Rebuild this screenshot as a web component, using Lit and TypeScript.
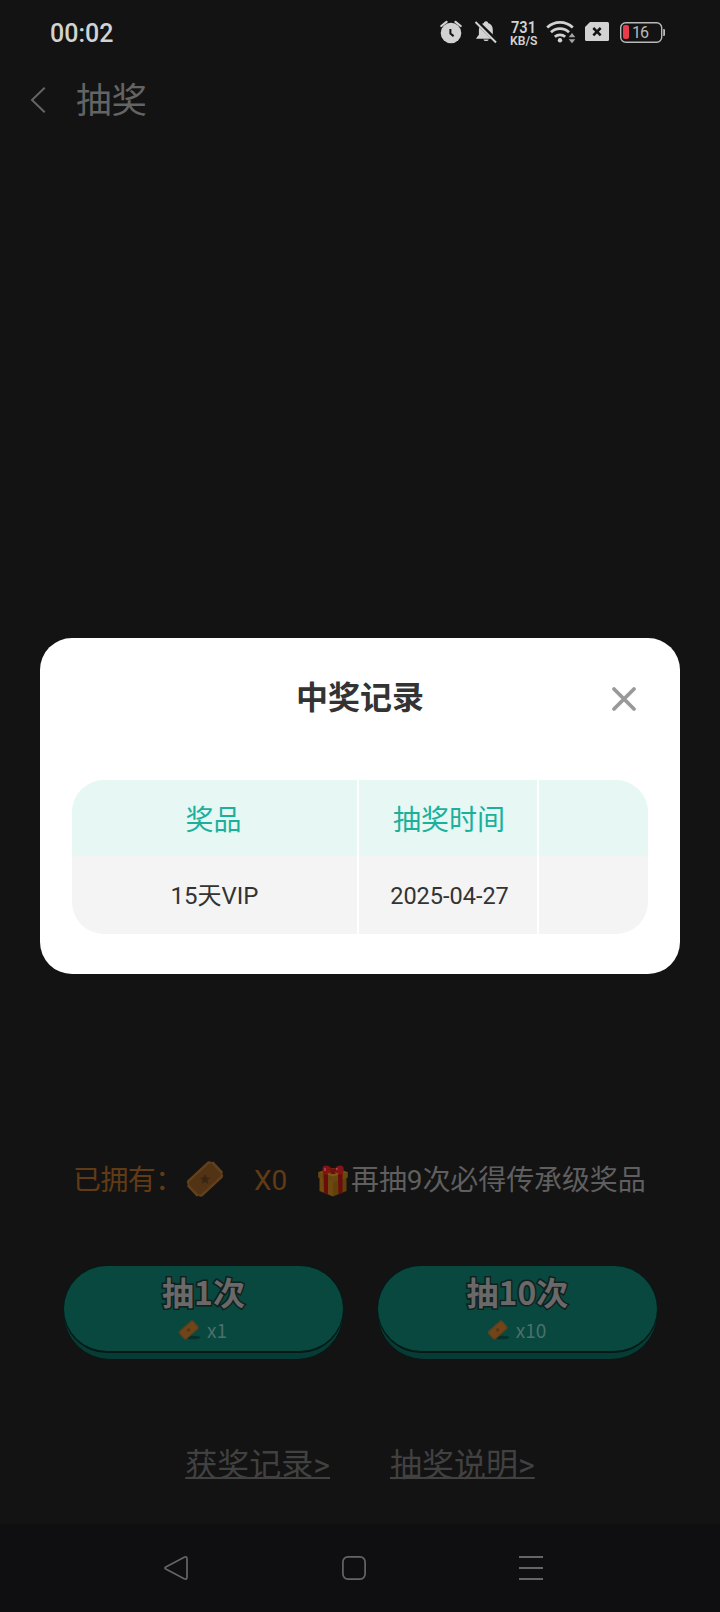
import { LitElement, html, css, svg } from "lit";
import { customElement, property } from "lit/decorators.js";

const ticketShape = svg`
  <g transform="rotate(-43 20 20)">
    <path d="M4 10.500l2-1.500h28l2 1.500 0 1.500 2 1v14l-2 1 0 1.500-2 1.500H6l-2-1.500 0-1.500-2-1v-14l2-1z" fill="#62401b"/>
    <rect x="4.500" y="11.500" width="31" height="17" rx="3" fill="#523414"/>
    <path transform="rotate(43 20 20)" d="M20 15l1.500 3.500 3.800.2-3 2.400 1.100 3.800-3.400-2.100-3.400 2.100 1.100-3.800-3-2.400 3.800-.2z" fill="#382614"/>
  </g>`;

const miniTicketShape = svg`
  <ellipse cx="28" cy="36.500" rx="17" ry="4" fill="#06302a"/>
  <g transform="rotate(-42 20 20)">
    <rect x="-2" y="7" width="43" height="25" rx="6" fill="#5c4020"/>
    <rect x="1" y="10" width="37" height="19" rx="4" fill="#704619"/>
    <circle cx="19.500" cy="19.500" r="4" fill="#593717"/>
  </g>`;

@customElement("ticket-icon")
export class TicketIcon extends LitElement {
  @property({ type: Boolean }) mini = false;
  static styles = css`
    :host { display: block; flex: none; }
    .art { display: block; width: 100%; height: 100%; overflow: visible; }
  `;
  render() {
    return html`<svg class="art" viewBox="0 0 40 40">${this.mini ? miniTicketShape : ticketShape}</svg>`;
  }
}

@customElement("status-bar")
export class StatusBar extends LitElement {
  static styles = css`
    :host {
      display: flex; align-items: center; height: 64px; box-sizing: border-box;
      padding: 0 54px 0 50px; color: #d2d2d2; font-family: Roboto, sans-serif;
    }
    .clock { flex: 1; font-size: 25px; line-height: 30px; font-weight: 500; padding-top: 3px; }
    .icons { display: block; width: 226px; height: 32px; }
    .rate { font-weight: 600; font-size: 16px; }
    .unit { font-weight: 600; font-size: 12px; }
    .level { font-size: 16px; }
  `;
  render() {
    return html`
      <span class="clock">00:02</span>
      <svg class="icons" viewBox="440 16 226 32" fill="#d2d2d2">
        <circle cx="451" cy="33" r="10.300"/>
        <path d="M441.300 26l5.200-4.200M460.700 26l-5.200-4.200" stroke="#d2d2d2" stroke-width="2.200" fill="none" stroke-linecap="round"/>
        <path d="M450.400 29v4.500l3.200 2.600" stroke="#131313" stroke-width="2" fill="none"/>
        <path d="M486 21.200c1.300 0 2 .8 2.100 1.800 3.100 1 4.700 3.600 4.700 6.800v5l3.200 3.400v.6H476.200v-.6l2.700-3.400v-5c0-3.200 1.700-5.800 5-6.800.1-1 .8-1.800 2.100-1.800zM483.500 39.500h5.200c-.4 2-4.800 2-5.200 0z"/>
        <path d="M476.500 21.500l21 20.500" stroke="#131313" stroke-width="4.500"/>
        <path d="M475.500 22l20.500 20.500" stroke="#d2d2d2" stroke-width="2"/>
        <text class="rate" x="511" y="32.800" textLength="25" lengthAdjust="spacingAndGlyphs">731</text>
        <text class="unit" x="510" y="44.500" textLength="27.500" lengthAdjust="spacingAndGlyphs">KB/S</text>
        <g fill="none" stroke="#d2d2d2" stroke-width="2.700">
          <path d="M547.200 27.500a18.500 18.500 0 0 1 25.600 0"/>
          <path d="M551 32.300a13 13 0 0 1 18 0"/>
          <path d="M554.800 36.700a8 8 0 0 1 10.400 0"/>
        </g>
        <circle cx="560" cy="40.300" r="2.200"/>
        <path d="M568.700 37.200h6.600l-3.300-4.200zM568.700 39.200h6.600l-3.300 4z" fill="#a5a5a5"/>
        <path d="M590 22h17.500a1.500 1.500 0 0 1 1.500 1.500v16a1.500 1.500 0 0 1-1.500 1.500h-21a1.500 1.500 0 0 1-1.500-1.500V27z"/>
        <path d="M593.300 28l7.400 7.400M600.700 28l-7.400 7.400" stroke="#131313" stroke-width="2.500"/>
        <rect x="620.700" y="22.700" width="41" height="19.600" rx="5" fill="none" stroke="#b9b9b9" stroke-width="1.400"/>
        <rect x="623" y="25" width="6" height="14" rx="2" fill="#e93b4b"/>
        <path d="M663.300 29h.6a1 1 0 0 1 1 1v5a1 1 0 0 1-1 1h-.6z"/>
        <text class="level" x="632" y="38" textLength="17" fill="#b9b9b9">16</text>
      </svg>`;
  }
}

@customElement("draw-button")
export class DrawButton extends LitElement {
  @property() label = "";
  @property() cost = "";
  static styles = css`
    :host {
      display: block; box-sizing: border-box; width: 281px; height: 95px;
      background: #063c35; border: 1.500px solid #081512; border-radius: 47px;
      font-family: "Noto Sans CJK SC", sans-serif;
    }
    .face {
      display: flex; flex-direction: column; align-items: center; box-sizing: border-box;
      height: 88px; margin: -1px -1px 0; padding-top: 5px;
      background: #08483f; border: 1px solid #051a17; border-bottom-width: 2px; border-radius: 44px;
    }
    .label {
      font-size: 32px; line-height: 40px; font-weight: 700; color: #696969;
      -webkit-text-stroke: 3px #10201e; paint-order: stroke fill;
    }
    .cost { display: flex; align-items: center; gap: 9px; height: 32px; margin-top: 3px; color: #4c706a;
      font-size: 19px; line-height: 24px; }
    .ticket { width: 18px; height: 18px; }
  `;
  render() {
    return html`<div class="face">
      <span class="label">${this.label}</span>
      <span class="cost"><ticket-icon class="ticket" mini></ticket-icon>${this.cost}</span>
    </div>`;
  }
}

@customElement("record-dialog")
export class RecordDialog extends LitElement {
  static styles = css`
    :host {
      display: block; box-sizing: border-box; width: 640px; height: 336px; padding: 0 32px;
      background: #fff; border-radius: 32px; color: #333;
    }
    .head { display: grid; grid-template-columns: 48px 1fr 48px; align-items: center; height: 122px; }
    .title { grid-column: 2; text-align: center; font-size: 32px; line-height: 40px; font-weight: 700; margin-top: -2px; }
    .close { width: 26px; height: 26px; justify-self: center; }
    .table {
      display: grid; grid-template-columns: 285px 178px 109px; grid-template-rows: 76px 78px; column-gap: 2px;
      margin-top: 20px; border-radius: 32px; overflow: hidden;
    }
    .cell { box-sizing: border-box; text-align: center; background: #f4f4f4; font-size: 24px; padding-top: 2px; line-height: 76px; }
    .th { background: #e7f7f4; color: #1bb09c; font-size: 28px; padding-top: 4px; line-height: 72px; }
    .prize { padding-top: 5px; padding-right: 2px; line-height: 71px; }
    .date { padding-left: 3px; font-size: 23.500px; padding-top: 2px; }
    .time { padding-top: 5px; padding-left: 2px; line-height: 71px; }
  `;
  render() {
    return html`
      <div class="head">
        <span class="title">中奖记录</span>
        <svg class="close" viewBox="0 0 26 26" fill="none" stroke="#999" stroke-width="3.800" stroke-linecap="round">
          <path d="M3 3l20 20M23 3L3 23"/>
        </svg>
      </div>
      <div class="table">
        <div class="cell th prize">奖品</div>
        <div class="cell th time">抽奖时间</div>
        <div class="cell th"></div>
        <div class="cell">15天VIP</div>
        <div class="cell date">2025-04-27</div>
        <div class="cell"></div>
      </div>`;
  }
}

@customElement("app-root")
export class AppRoot extends LitElement {
  static styles = css`
    :host {
      display: flex; flex-direction: column; position: relative; width: 720px; height: 1612px;
      overflow: hidden; background: #131313;
      font-family: Roboto, "Noto Sans CJK SC", sans-serif;
    }
    .header { display: flex; align-items: center; height: 72px; padding-left: 30px; color: #646464; }
    .back { width: 16px; height: 26px; }
    .page { font-size: 35.500px; line-height: 48px; margin-left: 30px; padding-top: 2px; }
    .stage { flex: 1; }
    .owned { display: flex; align-items: center; height: 40px; padding-left: 73px; font-size: 28px; line-height: 40px; color: #613b16; }
    .ticket { width: 40px; height: 40px; margin-top: -4px; }
    .colon-label { width: 112px; }
    .owned-text { letter-spacing: -.6px; }
    .count { width: 64px; margin-left: 29px; }
    .gift { width: 30px; height: 32px; flex: none; }
    .pity { color: #5f5f5f; white-space: nowrap; margin-left: 3px; letter-spacing: -.1px; }
    .buttons { display: flex; gap: 33px; margin-top: 64px; padding-left: 63px; }
    .links { display: flex; gap: 60px; justify-content: center; margin-top: 83px; height: 81px; font-size: 32px; line-height: 44px; color: #414141; }
    .link { text-decoration: underline; text-decoration-thickness: 2px; text-underline-offset: 1px; text-decoration-skip-ink: none; }
    .nav { display: flex; justify-content: space-between; height: 88px; box-sizing: border-box; padding: 32px 177px 0 164px; background: #0f0f11; }
    .key { width: 24px; height: 24px; }
    .dialog { position: absolute; left: 40px; top: 638px; }
  `;
  render() {
    return html`
      <status-bar></status-bar>
      <div class="header">
        <svg class="back" viewBox="0 0 16 26" fill="none" stroke="#646464" stroke-width="2"><path d="M14.700.7L2 13l12.700 12.300"/></svg>
        <span class="page">抽奖</span>
      </div>
      <div class="stage"></div>
      <div class="owned">
        <span class="colon-label owned-text">已拥有：</span>
        <ticket-icon class="ticket"></ticket-icon>
        <span class="count">X0</span>
        <svg class="gift" viewBox="0 0 30 32">
          <path d="M1.500 12L15 16v15.500L1.500 26z" fill="#6e4a10"/>
          <path d="M28.500 12L15 16v15.500L28.500 26z" fill="#60400c"/>
          <path d="M.5 7L15 3l14.500 4v5.500L15 17 .5 12.500z" fill="#7b5914"/>
          <path d="M.5 7L15 11.500 29.500 7v5.500L15 17 .5 12.500z" fill="#694710"/>
          <path d="M5.500 8l4.500 1.500v20l-4-1.600zM20 9.500l4.500-1.500v19.900l-4 1.600z" fill="#6b0c0c"/>
          <path d="M14.500 4.500C11-.5 5-1 4.500 3.500 4 7 5 9.500 7 9.500s5-2 7.500-3.500zM16 4.500c3-5 9.500-5.500 9.700-1 .3 3.500-.7 6-2.700 6s-5-2-7-3.500z" fill="#841414"/>
          <path d="M12.500 3.500h5v5.500h-5z" fill="#701010"/>
          <path d="M7 3v3M18.800 3v2" stroke="#a05050" stroke-width="1.500"/>
        </svg>
        <span class="pity">再抽9次必得传承级奖品</span>
      </div>
      <div class="buttons">
        <draw-button label="抽1次" cost="x1"></draw-button>
        <draw-button label="抽10次" cost="x10"></draw-button>
      </div>
      <div class="links">
        <span class="link">获奖记录&gt;</span>
        <span class="link">抽奖说明&gt;</span>
      </div>
      <div class="nav">
        <svg class="key" viewBox="0 0 24 24" fill="none" stroke="#656567" stroke-width="1.700"><path d="M1.800 10.900L20.200 1.200q2.800-1 2.800 1.600v18.400q0 2.600-2.800 1.600L1.800 13.100q-1.600-1.100 0-2.200z"/></svg>
        <svg class="key" viewBox="0 0 24 24" fill="none" stroke="#656567" stroke-width="1.700"><rect x=".9" y=".9" width="22.200" height="22.200" rx="5"/></svg>
        <svg class="key" viewBox="0 0 24 24" fill="none" stroke="#656567" stroke-width="1.900"><path d="M0 1h24M0 12h24M0 23h24"/></svg>
      </div>
      <record-dialog class="dialog"></record-dialog>`;
  }
}
